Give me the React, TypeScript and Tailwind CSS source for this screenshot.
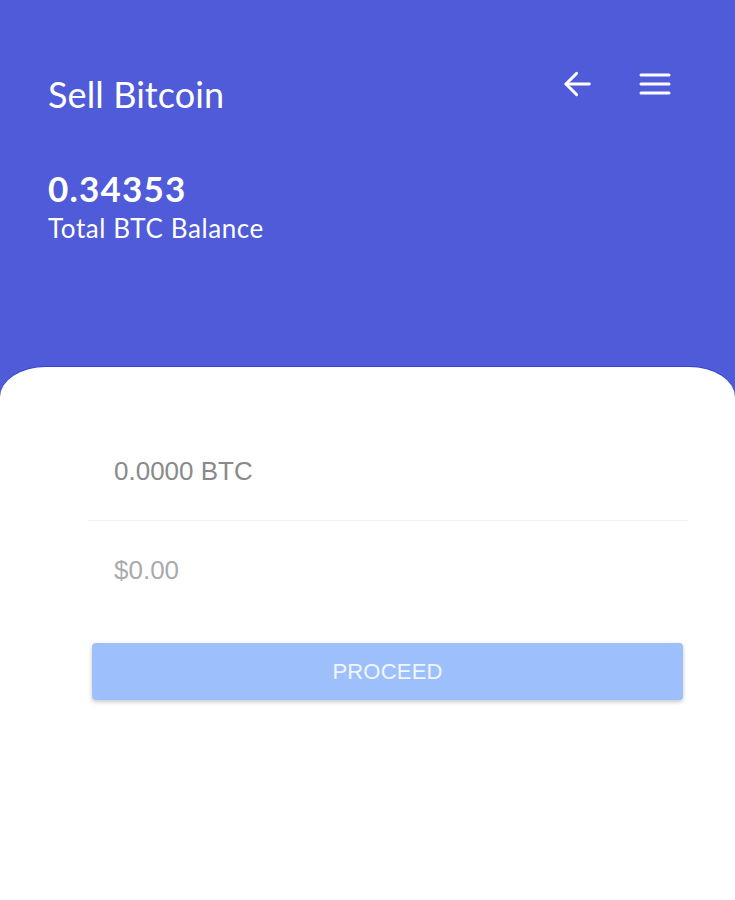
import React from "react";

export default function App() {
  return (
    <div className="w-[735px] h-[900px] bg-white overflow-hidden" style={{ fontFamily: "Lato, 'Noto Sans', sans-serif" }}>
      <div className="bg-[#4f5bd8] h-[400px] pt-[66px] px-[48px] text-white">
        <div className="flex items-start justify-between">
          <h1 className="text-[36px] leading-[56px] font-normal tracking-[0.1px]">Sell Bitcoin</h1>
          <div className="flex items-center gap-[44px] pr-[16px] pt-[1px]">
            <svg width="34" height="34" viewBox="0 0 24 24" fill="none" stroke="white" strokeWidth="2" strokeLinecap="round" strokeLinejoin="round">
              <path d="M20 12H3.5" />
              <path d="M11 4.5L3.5 12l7.5 7.5" />
            </svg>
            <svg width="32" height="30" viewBox="0 0 32 30" fill="none" stroke="white" strokeWidth="3" strokeLinecap="round">
              <path d="M2 6h28" />
              <path d="M2 15h28" />
              <path d="M2 24h28" />
            </svg>
          </div>
        </div>
        <div className="mt-[48px] text-[35px] leading-[36px] font-bold tracking-[1.2px]">0.34353</div>
        <div className="mt-[7px] text-[26px] leading-[30px] tracking-[0.6px]">Total BTC Balance</div>
      </div>
      <div className="relative -mt-[33px] bg-white rounded-tl-[46px_30px] rounded-tr-[46px_30px] shadow-[0_-1px_0_rgba(40,50,200,0.6)] pt-[84px]">
        <div className="mx-[88px] w-[600px]" style={{ fontFamily: "'Liberation Sans', Arial, sans-serif" }}>
          <div className="h-[70px] border-b border-[#f0f0f0] pl-[26px]">
            <span className="text-[26px] leading-[40px] text-[#8a8a8a]">0.0000 BTC</span>
          </div>
          <div className="h-[122px] pl-[26px] pt-[29px]">
            <span className="text-[26px] leading-[40px] text-[#aaaaaa]">$0.00</span>
          </div>
        </div>
        <div className="ml-[92px] w-[591px] h-[57px] rounded-[4px] bg-[#9dbffb] shadow-[0_2px_4px_rgba(0,0,0,0.22)] flex items-center justify-center" style={{ fontFamily: "'Liberation Sans', Arial, sans-serif" }}>
          <span className="text-[22px] text-white/85 tracking-[0.2px]">PROCEED</span>
        </div>
      </div>
    </div>
  );
}
